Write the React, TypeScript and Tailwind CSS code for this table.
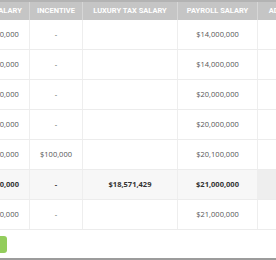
import React from 'react';

type Row = {
  base: string;
  incentive: string;
  luxury: string;
  payroll: string;
  total?: boolean;
};

const rows: Row[] = [
  { base: '$14,000,000', incentive: '-', luxury: '', payroll: '$14,000,000' },
  { base: '$14,000,000', incentive: '-', luxury: '', payroll: '$14,000,000' },
  { base: '$20,000,000', incentive: '-', luxury: '', payroll: '$20,000,000' },
  { base: '$20,000,000', incentive: '-', luxury: '', payroll: '$20,000,000' },
  { base: '$20,000,000', incentive: '$100,000', luxury: '', payroll: '$20,100,000' },
  { base: '$21,000,000', incentive: '-', luxury: '$18,571,429', payroll: '$21,000,000', total: true },
  { base: '$21,000,000', incentive: '-', luxury: '', payroll: '$21,000,000' },
];

const headers = ['Base Salary', 'Incentive', 'Luxury Tax Salary', 'Payroll Salary', 'Adjusted Salary'];
const widths = ['w-[64px]', 'w-[53px]', 'w-[95px]', 'w-[80px]', 'w-[90px]'];

export default function App() {
  return (
    <div className="w-[276px] h-[260px] bg-white overflow-hidden flex flex-col" style={{ fontFamily: '"Open Sans", sans-serif' }}>
      <div className="ml-[-34px] w-[382px] border-t-2 border-[#b3b3b3]">
        {/* header */}
        <div className="flex h-[18px] bg-[#c5c5c5]">
          {headers.map((h, i) => (
            <div
              key={h}
              className={`${widths[i]} shrink-0 flex items-center justify-center text-white uppercase font-bold text-[7.5px] border-r border-[#d6d6d6] whitespace-nowrap`}
              style={{ fontFamily: 'Roboto, sans-serif' }}
            >
              {h}
            </div>
          ))}
        </div>
        {/* body */}
        {rows.map((r, idx) => (
          <div
            key={idx}
            className={`flex h-[30px] border-b border-[#ececec] text-[7.5px] ${r.total ? 'bg-[#f7f7f7] font-bold text-[#333]' : 'text-[#555]'}`}
          >
            <div className="w-[64px] shrink-0 flex items-center justify-center border-r border-[#eeeeee]">{r.base}</div>
            <div className="w-[53px] shrink-0 flex items-center justify-center border-r border-[#eeeeee]">{r.incentive}</div>
            <div className="w-[95px] shrink-0 flex items-center justify-center border-r border-[#eeeeee]">{r.luxury}</div>
            <div className="w-[80px] shrink-0 flex items-center justify-center border-r border-[#eeeeee]">{r.payroll}</div>
            <div className={`w-[90px] shrink-0 border-r border-[#eeeeee] ${r.total ? 'bg-[#eeeeee]' : ''}`}></div>
          </div>
        ))}
      </div>
      <div className="mt-[6px] ml-[-10px] w-[17px] h-[17px] rounded-[3px] bg-[#93cd5c]"></div>
      <div className="mt-auto h-[2px] bg-[#9c9c9c]"></div>
    </div>
  );
}
